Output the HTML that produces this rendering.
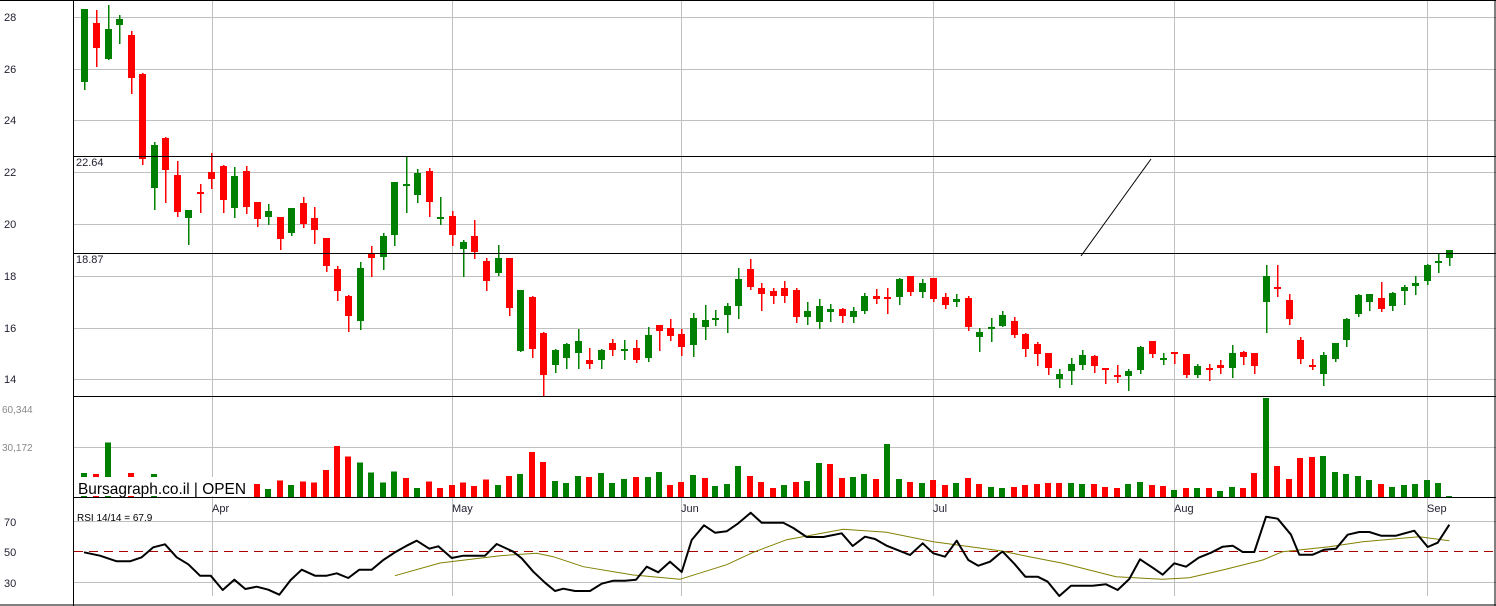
<!DOCTYPE html>
<html><head><meta charset="utf-8"><style>
html,body{margin:0;padding:0;background:#fff;width:1496px;height:606px;overflow:hidden}
svg{display:block}
text{font-family:"Liberation Sans",sans-serif}
</style></head><body>
<svg id="s" width="1496" height="606" xmlns="http://www.w3.org/2000/svg" shape-rendering="crispEdges">
<rect width="1496" height="606" fill="#fff"/>
<g id="grid" stroke="#c0c0c0" stroke-width="1"></g>
<g id="vol"></g>
<g id="cand"></g>
<rect x="76" y="477" width="172" height="19" fill="#fff"/>
<text x="78" y="494" font-size="16" textLength="168" lengthAdjust="spacingAndGlyphs" fill="#000">Bursagraph.co.il | OPEN</text>
<g stroke="#000" stroke-width="1.3">
<line x1="74" y1="156.5" x2="1496" y2="156.5"/>
<line x1="74" y1="253.5" x2="1496" y2="253.5"/>
<line x1="0" y1="0.5" x2="1496" y2="0.5"/>
<line x1="74" y1="396.5" x2="1496" y2="396.5"/>
<line x1="74" y1="497.5" x2="1496" y2="497.5"/>
<line x1="0" y1="605" x2="1496" y2="605"/>
<line x1="73.5" y1="0" x2="73.5" y2="606"/>
<line x1="1495" y1="0" x2="1495" y2="606"/>
</g>
<line x1="1081" y1="256" x2="1151" y2="159" stroke="#000" stroke-width="1" shape-rendering="auto"/>
<g font-size="11" fill="#223">
<text x="76" y="166">22.64</text>
<text x="76" y="263">18.87</text>
<text x="4" y="21">28</text><text x="4" y="73">26</text><text x="4" y="124">24</text><text x="4" y="176">22</text>
<text x="4" y="228">20</text><text x="4" y="280">18</text><text x="4" y="332">16</text><text x="4" y="383">14</text>
<text x="4" y="526">70</text><text x="4" y="556">50</text><text x="4" y="587">30</text>
</g>
<g font-size="10" fill="#888"><text x="2" y="413">60,344</text><text x="2" y="451">30,172</text></g>
<g font-size="11" fill="#223"><text x="212" y="512">Apr</text><text x="452" y="512">May</text><text x="681" y="512">Jun</text><text x="933" y="512">Jul</text><text x="1174" y="512">Aug</text><text x="1427" y="512">Sep</text></g>
<text x="77" y="521" font-size="10" fill="#000">RSI 14/14 = 67.9</text>
<line x1="74" y1="551.5" x2="1496" y2="551.5" stroke="#a00" stroke-width="1" stroke-dasharray="9,6"/>
<polyline id="ma" fill="none" stroke="#808000" stroke-width="1" shape-rendering="auto"/>
<polyline id="rsi" fill="none" stroke="#000" stroke-width="2" shape-rendering="auto" stroke-linejoin="round"/>
</svg>
<script>
(function(){
var NS="http://www.w3.org/2000/svg";
function el(p,t,a){var e=document.createElementNS(NS,t);for(var k in a)e.setAttribute(k,a[k]);p.appendChild(e);return e;}
var G=document.getElementById("grid");
[17,69,120,172,224,276,328,379,447,521,582].forEach(function(y){el(G,"line",{x1:74,y1:y+.5,x2:1496,y2:y+.5});});
[212,452,681,933,1174,1427].forEach(function(x){el(G,"line",{x1:x+.5,y1:0,x2:x+.5,y2:596});});
var C=[[84.3,9,82,9,89,"g"],[96.3,23,48,10,66,"r"],[107.5,29,59,5,59,"g"],[119.3,19,25,15,43,"g"],[130.7,35,78,31,93,"r"],[142.3,74,159,73,164,"r"],[153.5,145,188,142,209,"g"],[165.3,138,170,137,202,"r"],[176.7,175,212,161,216,"r"],[188.3,210,218,210,244,"g"],[199.7,192,193,184,212,"r"],[211.3,172,179,153,188,"r"],[222.7,166,200,165,212,"r"],[234.3,176,208,167,217,"g"],[245.7,171,207,166,213,"r"],[257.3,202,219,202,226,"r"],[268.3,211,217,204,224,"g"],[279.5,217,239,217,249,"r"],[291.3,208,233,208,235,"g"],[302.7,203,224,197,227,"r"],[314.3,218,230,207,243,"r"],[325.7,238,266,238,271,"r"],[337.3,269,291,266,300,"r"],[348.3,296,316,295,331,"r"],[360.3,268,321,262,329,"g"],[371.3,254,258,246,276,"r"],[383.3,236,257,233,269,"g"],[394.3,182,235,182,245,"g"],[406.3,184,185,156,212,"g"],[417.3,173,195,169,202,"g"],[429.3,171,202,168,216,"r"],[440.3,217,218,197,224,"g"],[452.3,216,235,211,245,"r"],[463.3,242,249,240,276,"g"],[474.3,236,252,220,258,"r"],[486.3,261,281,258,290,"r"],[497.7,258,273,245,275,"g"],[509.3,258,308,258,315,"r"],[520.3,290,351,290,351,"g"],[532.2,297,349,296,357,"r"],[543.3,333,375,332,395,"r"],[555,350,365,349,372,"g"],[566.3,344,358,343,368,"g"],[578,341,353,329,368,"g"],[589.3,360,364,348,368,"r"],[601,350,360,349,368,"g"],[612.3,343,350,339,355,"r"],[624.3,349,350,340,359,"g"],[635.5,348,360,340,362,"r"],[647.5,335,358,327,361,"g"],[658.5,325,331,325,350,"r"],[669.5,328,336,319,340,"r"],[681.3,334,347,329,355,"r"],[692.5,318,345,313,356,"g"],[704.5,320,327,305,339,"g"],[715.3,318,319,310,325,"g"],[727.3,306,315,303,332,"g"],[738.3,279,306,268,318,"g"],[750.3,269,287,259,289,"r"],[761.3,288,294,283,310,"r"],[773.3,291,296,288,303,"r"],[784.3,288,296,281,302,"r"],[796.3,290,317,288,322,"r"],[807.3,311,317,302,324,"g"],[819.3,306,322,299,328,"g"],[830.3,309,312,304,321,"g"],[842.3,309,316,308,322,"r"],[853.3,311,317,307,322,"g"],[864.3,296,311,293,313,"g"],[876.3,296,299,289,303,"r"],[887.3,297,299,288,313,"r"],[899.3,279,297,278,304,"g"],[910.3,276,292,276,295,"r"],[922.3,283,292,279,297,"g"],[933.3,278,299,278,301,"r"],[945.3,297,305,293,308,"r"],[956.3,299,302,294,306,"g"],[968.3,298,327,296,330,"r"],[979.3,332,337,328,351,"g"],[991.3,327,328,318,341,"g"],[1002.3,315,326,311,326,"g"],[1014.3,321,335,317,337,"r"],[1025.3,334,349,333,356,"r"],[1037.3,344,354,342,365,"r"],[1048.3,353,368,353,374,"r"],[1059.3,374,379,369,387,"g"],[1071.3,364,371,358,384,"g"],[1082.3,355,365,350,369,"g"],[1094.3,356,366,355,372,"r"],[1105.3,368,369,368,383,"r"],[1117,375,376,365,382,"r"],[1128.3,371,376,369,390,"g"],[1140.3,347,370,346,373,"g"],[1151.5,341,354,341,357,"r"],[1163.3,358,359,353,364,"g"],[1174.3,352,354,352,363,"r"],[1186.3,354,375,354,377,"r"],[1197.3,366,375,364,377,"g"],[1209.3,368,369,364,380,"r"],[1220.3,365,368,360,373,"r"],[1232.3,353,368,345,377,"g"],[1243.3,352,357,351,364,"r"],[1254.3,353,366,353,373,"r"],[1266.3,276,302,265,332,"g"],[1277,287,288,265,296,"r"],[1289.3,300,319,294,324,"r"],[1300.3,340,359,337,363,"r"],[1312.3,365,367,359,369,"r"],[1323.3,355,374,352,385,"g"],[1335.3,343,359,343,361,"g"],[1346.3,319,340,318,346,"g"],[1358.3,295,314,294,316,"g"],[1369.3,294,302,294,310,"g"],[1381.3,298,309,282,311,"r"],[1392.3,293,306,292,310,"g"],[1404.3,287,291,285,304,"g"],[1415.3,283,286,276,294,"g"],[1427.3,265,281,264,284,"g"],[1438.3,261,262,254,272,"g"],[1449.3,250,258,250,265,"g"]];
var col={g:"#008000",r:"#ff0000"};
var K=document.getElementById("cand");
C.forEach(function(c){var x=Math.round(c[0]);var f=col[c[5]];
el(K,"rect",{x:x,y:c[3],width:1.5,height:c[4]-c[3]+1,fill:f});
el(K,"rect",{x:x-3,y:c[1],width:7,height:Math.max(2,c[2]-c[1]),fill:f});});
var V={1:[249,"g"],2:[252,"r"],3:[158,"g"],5:[249,"r"],7:[252,"g"]};
var v16=[282,297,272,285,275,278,240,168,200,218,248,278,245,264,294,275,294,285,278,288,269,285];
var c16="rgrgrrrrrggggrgrrrrrrg";
for(var i=0;i<22;i++)V[16+i]=[v16[i],c16[i]];
var v38=[258,252,186,216,273,279,258,261,249,279,267,261,261,246,285,276,255,264,288,282,228,258,276,294,285,276,273,219,222,264,261,252,267,162,267,276,279,270,285,279,264,282,291,294];
var c38="rgrrgggrgggrggrrgrgggrrrgrggrrggrggrgrrgrrgg";
for(i=0;i<44;i++)V[38+i]=[v38[i],c38[i]||"g"];
var v82=[291,285,282,279,279,279,282,282,291,294,282,276,285,288,300,294,294,294,303,291,294,249,24,228,267,204,201,198,246,252,258,270,282,291,285,282,270,279,318];
var c82="rrrrrggrrrggrrgrgrggrrgrrrrgggggrgggggg";
for(i=0;i<39;i++)V[82+i]=[v82[i],c82[i]||"g"];
var VG=document.getElementById("vol");
for(var k in V){var cc=C[parseInt(k)-1];var ty=V[k][0]/3+390;var vx=Math.round(cc[0])-3;
el(VG,"rect",{x:vx,y:ty.toFixed(1),width:6,height:(497-ty).toFixed(1),fill:col[V[k][1]]});}
function pts(a,x0){var o=[];for(var j=0;j<a.length;j+=2)o.push((a[j]/3+x0).toFixed(1)+","+(a[j+1]/3+390).toFixed(1));return o;}
var r=[].concat(
pts([252,487,300,497,350,514,390,514,425,502,460,472,495,463,530,502,565,523,600,557,632,557,668,600,703,569,736,597,770,590,805,599,838,614,872,570,905,539,945,557,980,557,1010,550,1045,564,1078,539,1115,539,1150,510,1185,487,1220,467,1250,452,1288,476,1315,469,1355,504,1390,497,1455,497,1490,462],0),
pts([40,485,65,505,100,545,135,578,165,603,190,596,225,603,270,603,305,581,340,572,375,572,408,569,440,530,475,547,510,515,545,546,575,450,612,406,645,428,680,424,715,400,752,368,785,398,850,398,880,414,920,441,970,441,1025,430,1058,468,1095,440,1125,447,1160,467,1230,495,1268,460,1300,490,1335,500,1370,452,1405,510,1435,527,1470,515,1500,490],500),
pts([20,485,55,521,88,560,125,560,155,575,190,618,225,587,290,587,330,583,365,600,400,567,432,508,470,533,500,554,535,520,570,530,608,503,645,488,680,470,710,467,740,486,775,486,810,380,845,386,885,434,910,494,950,494,985,479,1020,476,1055,434,1090,426,1120,426,1155,437,1200,437,1255,422,1295,471,1325,458,1360,404],996));
document.getElementById("rsi").setAttribute("points",r.join(" "));
var m=[].concat(pts([1185,557,1320,519,1500,497],0),
pts([110,490,160,500,250,530,400,555,540,568,680,524,760,487,860,449,1030,418,1160,427,1300,455,1500,482],500),
pts([100,500,200,520,360,560,500,568,580,563,680,540,800,510,860,485,1000,470,1100,455,1270,440,1360,452],996));
document.getElementById("ma").setAttribute("points",m.join(" "));
})();
</script>
</body></html>
